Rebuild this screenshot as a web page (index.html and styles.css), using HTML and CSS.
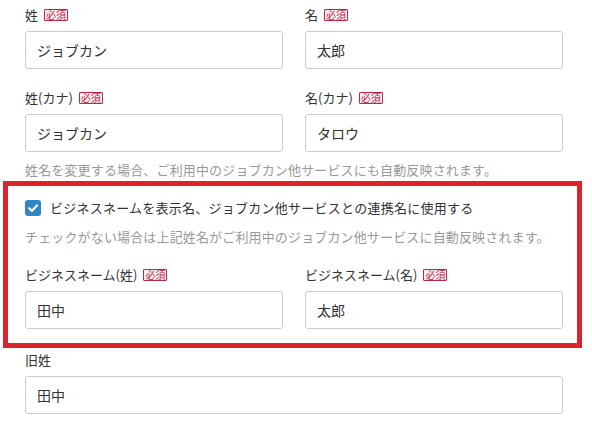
FILE: index.html
```html
<!DOCTYPE html>
<html lang="ja">
<head>
<meta charset="utf-8">
<link rel="stylesheet" href="styles.css">
</head>
<body>
<div class="form">
  <div class="row">
    <div class="field">
      <div class="label">姓<span class="req">必須</span></div>
      <div class="input">ジョブカン</div>
    </div>
    <div class="field">
      <div class="label">名<span class="req">必須</span></div>
      <div class="input">太郎</div>
    </div>
  </div>
  <div class="row row-next">
    <div class="field">
      <div class="label">姓(カナ)<span class="req">必須</span></div>
      <div class="input">ジョブカン</div>
    </div>
    <div class="field">
      <div class="label">名(カナ)<span class="req">必須</span></div>
      <div class="input">タロウ</div>
    </div>
  </div>
  <p class="help help-top">姓名を変更する場合、ご利用中のジョブカン他サービスにも自動反映されます。</p>

  <div class="highlight">
    <label class="check">
      <span class="box"><svg width="16" height="16" viewBox="0 0 16 16"><path d="M4.2 8.3 L6.9 10.9 L11.9 5.4" fill="none" stroke="#fff" stroke-width="2.2" stroke-linecap="round" stroke-linejoin="round"/></svg></span>
      <span>ビジネスネームを表示名、ジョブカン他サービスとの連携名に使用する</span>
    </label>
    <p class="help help-check">チェックがない場合は上記姓名がご利用中のジョブカン他サービスに自動反映されます。</p>
    <div class="row row-biz">
      <div class="field">
        <div class="label">ビジネスネーム(姓)<span class="req">必須</span></div>
        <div class="input">田中</div>
      </div>
      <div class="field">
        <div class="label">ビジネスネーム(名)<span class="req">必須</span></div>
        <div class="input">太郎</div>
      </div>
    </div>
  </div>

  <div class="field field-old">
    <div class="label">旧姓</div>
    <div class="input">田中</div>
  </div>
</div>
</body>
</html>
```

FILE: styles.css
```css
* { box-sizing: border-box; }
html, body { margin: 0; padding: 0; background: #fff; }
body {
  font-family: "Noto Sans CJK JP", "Noto Sans", sans-serif;
  color: #333;
  font-size: 13px;
}
.form {
  padding: 5px 29px 0 25px;
  width: 592px;
}
.row {
  display: grid;
  grid-template-columns: 1fr 1fr;
  column-gap: 22px;
}
.row-next { margin-top: 19px; }
.field { display: flex; flex-direction: column; gap: 6px; }
.label {
  display: flex;
  align-items: center;
  height: 20px;
  line-height: 20px;
  font-size: 13px;
  color: #333;
}
.req {
  display: inline-flex;
  align-items: center;
  justify-content: center;
  margin-left: 6px;
  height: 12px;
  padding: 0 1px;
  font-size: 10px;
  line-height: 10px;
  color: #b8274a;
  background: #fdf0f3;
  border: 1px solid #b8274a;
  border-radius: 1px;
}
.input {
  height: 38px;
  border: 1px solid #cccccc;
  border-radius: 3px;
  padding: 0 11px;
  display: flex;
  align-items: center;
  font-size: 14px;
  color: #333;
  background: #fff;
}
.help {
  margin: 0;
  color: #999;
  font-size: 13px;
  line-height: 20px;
  letter-spacing: 0.15px;
}
.help-top { margin-top: 8px; }
.highlight {
  margin: 1px -19px 0 -22px;
  border: 5px solid #d9232e;
  padding: 12px 14px 14px 17px;
}
.check {
  display: flex;
  align-items: center;
  gap: 9px;
  height: 20px;
  line-height: 20px;
  font-size: 13px;
  letter-spacing: 0.25px;
  color: #333;
}
.box {
  width: 16px;
  height: 16px;
  background: #2f86c3;
  border-radius: 3px;
  display: flex;
  flex: none;
}
.help-check { margin-top: 9px; }
.row-biz { margin-top: 18px; }
.field-old { margin-top: 2px; }
```
